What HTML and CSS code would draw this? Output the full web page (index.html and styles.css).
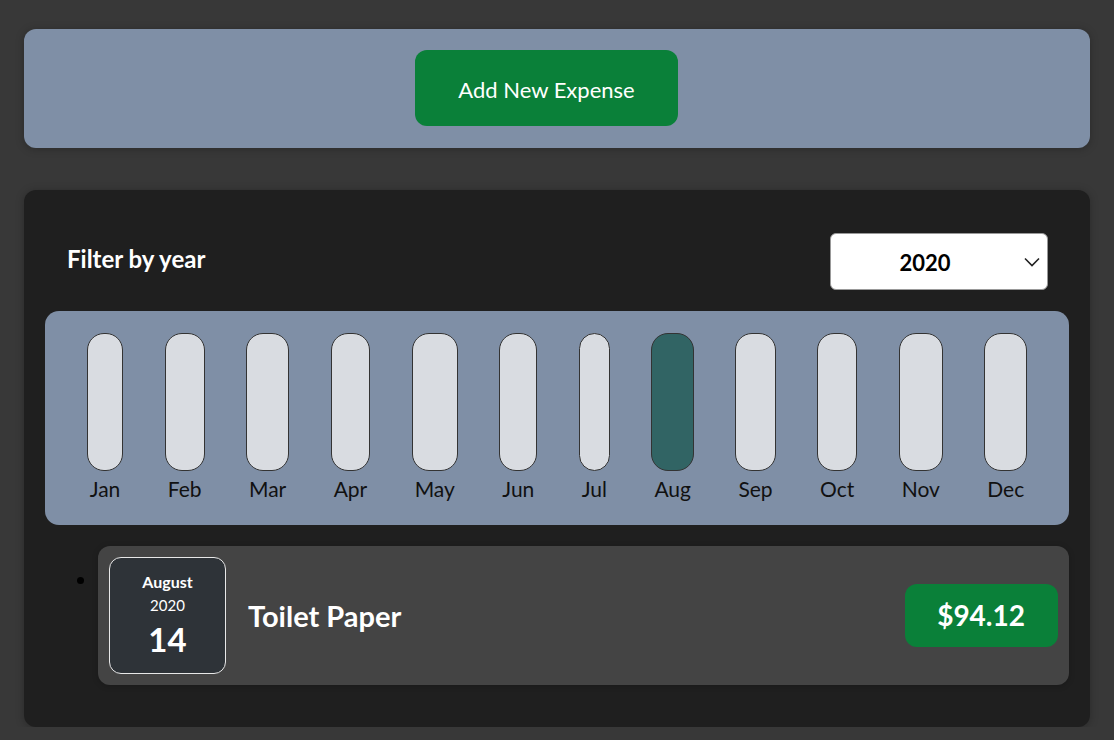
FILE: index.html
```html
<!DOCTYPE html>
<html lang="en">
<head>
<meta charset="utf-8">
<title>Expenses</title>
<link rel="stylesheet" href="styles.css">
</head>
<body>
<div class="new-expense">
  <button class="add-btn" type="button">Add New Expense</button>
</div>

<div class="expenses">
  <div class="filter">
    <label class="filter-label">Filter by year</label>
    <div class="select-wrap">
      <select class="year-select">
        <option>2022</option>
        <option>2021</option>
        <option selected>2020</option>
        <option>2019</option>
      </select>
      <svg class="chevron" width="16" height="10" viewBox="0 0 16 10"><path d="M1 1.5 L8 8.5 L15 1.5" fill="none" stroke="#222" stroke-width="1.6"/></svg>
    </div>
  </div>

  <div class="chart">
    <div class="bar"><div class="bar-inner"></div><div class="bar-label">Jan</div></div>
    <div class="bar"><div class="bar-inner"></div><div class="bar-label">Feb</div></div>
    <div class="bar"><div class="bar-inner"></div><div class="bar-label">Mar</div></div>
    <div class="bar"><div class="bar-inner"></div><div class="bar-label">Apr</div></div>
    <div class="bar"><div class="bar-inner"></div><div class="bar-label">May</div></div>
    <div class="bar"><div class="bar-inner"></div><div class="bar-label">Jun</div></div>
    <div class="bar"><div class="bar-inner"></div><div class="bar-label">Jul</div></div>
    <div class="bar"><div class="bar-inner active"></div><div class="bar-label">Aug</div></div>
    <div class="bar"><div class="bar-inner"></div><div class="bar-label">Sep</div></div>
    <div class="bar"><div class="bar-inner"></div><div class="bar-label">Oct</div></div>
    <div class="bar"><div class="bar-inner"></div><div class="bar-label">Nov</div></div>
    <div class="bar"><div class="bar-inner"></div><div class="bar-label">Dec</div></div>
  </div>

  <ul class="expense-list">
    <li>
      <div class="expense-item">
        <div class="expense-date">
          <div class="date-month">August</div>
          <div class="date-year">2020</div>
          <div class="date-day">14</div>
        </div>
        <div class="expense-desc">
          <h2 class="expense-title">Toilet Paper</h2>
          <div class="expense-price">$94.12</div>
        </div>
      </div>
    </li>
  </ul>
</div>
</body>
</html>
```
FILE: styles.css
```css
* { box-sizing: border-box; }

html, body {
  margin: 0;
  padding: 0;
}

body {
  background: #383838;
  font-family: "Lato", "Liberation Sans", sans-serif;
  padding: 29px 24px 0;
}

.new-expense {
  background: #7f8fa6;
  border-radius: 12px;
  padding: 21px 21px 22px;
  text-align: center;
  box-shadow: 0 1px 8px rgba(0, 0, 0, 0.25);
}

.add-btn {
  font-family: inherit;
  font-size: 22px;
  line-height: 34px;
  color: #fff;
  background: #0a8039;
  border: none;
  border-radius: 12px;
  padding: 23px 43px 19px;
  margin-right: 21px;
  cursor: pointer;
}

.expenses {
  margin-top: 42px;
  background: #1f1f1f;
  border-radius: 12px;
  padding: 21px;
  box-shadow: 0 1px 8px rgba(0, 0, 0, 0.25);
}

.filter {
  display: flex;
  align-items: center;
  justify-content: space-between;
  padding: 0 21px 0 22px;
  margin: 22px 0 21px;
  color: #fff;
}

.filter-label {
  font-size: 24px;
  font-weight: 700;
  margin-top: -6px;
}

.select-wrap {
  position: relative;
  width: 218px;
  height: 57px;
}

.year-select {
  appearance: none;
  -webkit-appearance: none;
  width: 100%;
  height: 100%;
  font-family: inherit;
  font-size: 22px;
  font-weight: 700;
  color: #000;
  background: #fff;
  border: 1px solid #999;
  border-radius: 6px;
  text-align: center;
  text-align-last: center;
  padding: 2px 36px 0 8px;
}

.chevron {
  position: absolute;
  right: 8px;
  top: 24px;
  pointer-events: none;
}

.chart {
  background: #7f8fa6;
  border-radius: 14px;
  height: 214px;
  padding: 22px 21px 21px;
  display: flex;
  justify-content: space-around;
}

.bar {
  display: flex;
  flex-direction: column;
  align-items: center;
  height: 100%;
}

.bar-inner {
  flex: 1;
  width: 100%;
  background: #d9dce1;
  border: 1px solid #333;
  border-radius: 17px;
}

.bar-inner.active {
  background: #316464;
}

.bar-label {
  font-size: 21px;
  line-height: 31px;
  padding: 2px 3px 0;
  color: #111;
}

.expense-list {
  margin: 0;
  padding: 0 0 0 53px;
  color: #000;
  font-size: 21px;
}

.expense-list li {
  margin: 21px 0;
}

.expense-item {
  display: flex;
  align-items: center;
  background: #444444;
  border-radius: 12px;
  padding: 11px;
  box-shadow: 0 1px 6px rgba(0, 0, 0, 0.2);
}

.expense-date {
  width: 117px;
  height: 117px;
  flex-shrink: 0;
  display: flex;
  flex-direction: column;
  align-items: center;
  justify-content: center;
  background: #2e3338;
  border: 1px solid #e8e8e8;
  border-radius: 12px;
  color: #fff;
}

.date-month {
  font-size: 16px;
  font-weight: 700;
  line-height: 22px;
}

.date-year {
  font-size: 15px;
  line-height: 24px;
}

.date-day {
  font-size: 33px;
  font-weight: 700;
  line-height: 44px;
}

.expense-desc {
  flex: 1;
  display: flex;
  align-items: center;
  justify-content: space-between;
}

.expense-title {
  margin: 0 22px;
  font-size: 29px;
  font-weight: 700;
  color: #fff;
}

.expense-price {
  font-size: 28px;
  font-weight: 700;
  color: #fff;
  background: #0a8039;
  border-radius: 12px;
  padding: 11px 33px 11px 32px;
  line-height: 41px;
}
```
